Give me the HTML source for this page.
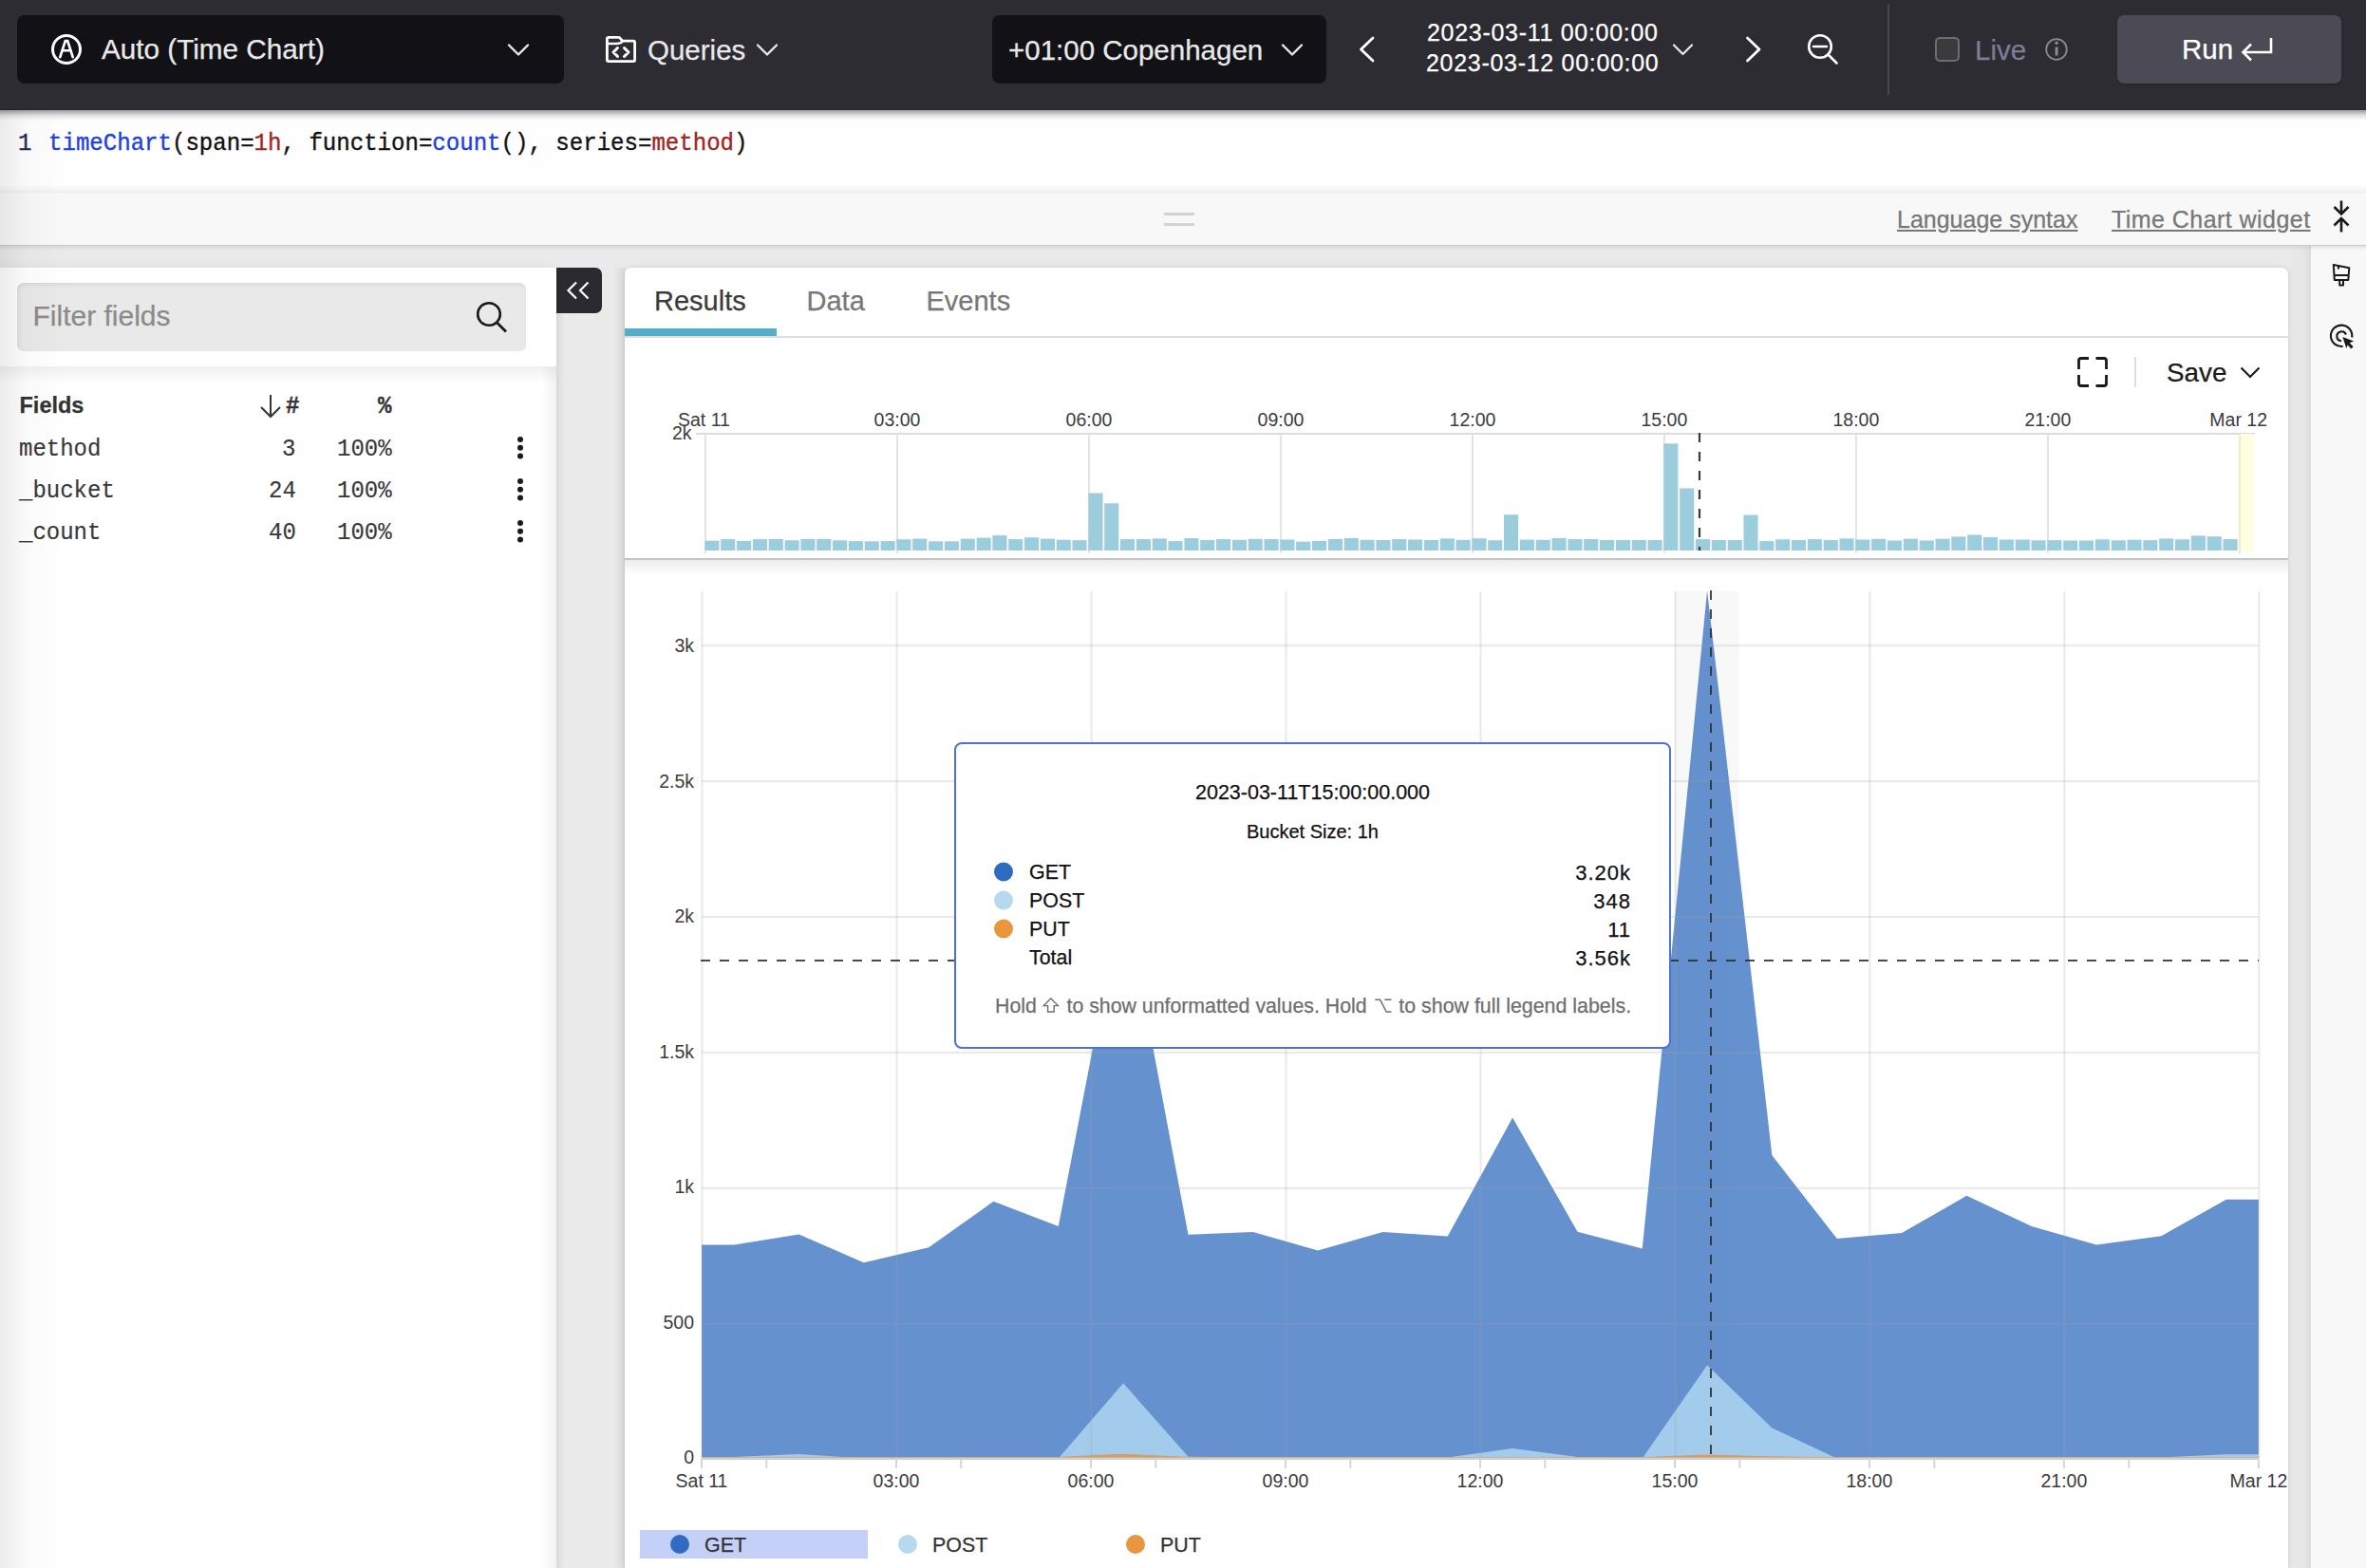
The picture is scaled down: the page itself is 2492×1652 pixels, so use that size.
<!DOCTYPE html>
<html><head><meta charset="utf-8">
<style>
*{margin:0;padding:0;box-sizing:border-box}
html,body{width:2492px;height:1652px;overflow:hidden;background:#eaeaea;font-family:"Liberation Sans",sans-serif}
.a{position:absolute}
.t{position:absolute;white-space:nowrap;line-height:1;-webkit-text-stroke:0.25px currentColor}
.mono{font-family:"Liberation Mono",monospace;-webkit-text-stroke:0.35px currentColor;transform:scaleY(1.07);transform-origin:0 84.6%}
svg{position:absolute;left:0;top:0}
</style></head><body>

<!-- top bar -->
<div class="a" style="left:0;top:0;width:2492px;height:115px;background:#2d2c32"></div>
<div class="a" style="left:0;top:115px;width:2492px;height:1px;background:#252429;z-index:1"></div>
<div class="a" style="left:18px;top:16px;width:576px;height:72px;background:#121116;border-radius:8px"></div>
<svg width="2492" height="120" style="z-index:2" stroke-linecap="round" stroke-linejoin="round">
  <!-- circle A -->
  <circle cx="70" cy="52" r="14.5" fill="none" stroke="#fff" stroke-width="3"/>
  <path d="M63.3 60.2 L68.8 43.2 H71.2 L76.7 60.2" fill="none" stroke="#fff" stroke-width="2.7" stroke-linejoin="miter"/>
  <path d="M65.8 53.2 H74.2" fill="none" stroke="#fff" stroke-width="2.6"/>
  <!-- chevron -->
  <path d="M536 47.5 L546 57.5 L556 47.5" fill="none" stroke="#e8e8ea" stroke-width="2.4"/>
  <!-- folder icon -->
  <path d="M639.4 63 V41 Q639.4 39.4 641 39.4 H652.3 L655.8 43.2 H667 Q668.6 43.2 668.6 44.8 V63 Q668.6 64.6 667 64.6 H641 Q639.4 64.6 639.4 63 Z" fill="none" stroke="#fff" stroke-width="2.8"/>
  <path d="M639.4 46 H649.5 Q653.5 46 656 43.2" fill="none" stroke="#fff" stroke-width="2.4"/>
  <path d="M650.5 50.5 L646 55 L650.5 59.5 M657.5 50.5 L662 55 L657.5 59.5" fill="none" stroke="#fff" stroke-width="3"/>
  <path d="M798 47.5 L808 57.5 L818 47.5" fill="none" stroke="#e8e8ea" stroke-width="2.4"/>
  <!-- tz chevron -->
  <path d="M1351 47.5 L1361 57.5 L1371 47.5" fill="none" stroke="#e8e8ea" stroke-width="2.4"/>
  <!-- < > -->
  <path d="M1446 40 L1433.5 52 L1446 64" fill="none" stroke="#fff" stroke-width="2.8"/>
  <path d="M1840.5 40 L1853 52 L1840.5 64" fill="none" stroke="#fff" stroke-width="2.8"/>
  <path d="M1763 47.5 L1772.5 57 L1782 47.5" fill="none" stroke="#e8e8ea" stroke-width="2.2"/>
  <!-- zoom out -->
  <circle cx="1917" cy="49" r="11.8" fill="none" stroke="#fff" stroke-width="2.6"/>
  <path d="M1910 49 H1924 M1925.5 57.5 L1934.5 66.5" fill="none" stroke="#fff" stroke-width="2.6"/>
  <!-- separator -->
  <rect x="1988" y="4" width="2" height="96" fill="#48474e"/>
  <!-- checkbox -->
  <rect x="2039" y="40" width="24" height="24" rx="4" fill="#3b3b3d" stroke="#6e6e6e" stroke-width="2"/>
  <!-- info -->
  <circle cx="2166" cy="52" r="10.8" fill="none" stroke="#8b8b8b" stroke-width="1.8"/>
  <rect x="2164.6" y="49.5" width="3" height="9" fill="#8b8b8b"/>
  <circle cx="2166.1" cy="45.2" r="1.7" fill="#8b8b8b"/>
</svg>
<div class="a" style="left:2230px;top:16px;width:236px;height:72px;background:#4b4a55;border-radius:7px;box-shadow:0 1px 2px rgba(0,0,0,0.3)"></div>
<svg width="2492" height="120" style="z-index:3">
  <path d="M2392 40 V55 H2363 M2371 46.5 L2362.5 55 L2371 63.5" fill="none" stroke="#fff" stroke-width="2.6"/>
</svg>
<div class="a" style="left:1045px;top:16px;width:352px;height:72px;background:#121116;border-radius:8px"></div>

<div class="t" style="left:107px;top:37.2px;font-size:29.7px;color:#e9e9eb;z-index:4">Auto (Time Chart)</div>
<div class="t" style="left:682px;top:37.5px;font-size:29.5px;color:#e9e9eb;z-index:4">Queries</div>
<div class="t" style="left:1062px;top:37.5px;font-size:29.5px;color:#e9e9eb;z-index:4">+01:00 Copenhagen</div>
<div class="t" style="left:1503px;top:22.4px;letter-spacing:0.7px;font-size:25px;color:#fff;z-index:4">2023-03-11 00:00:00</div>
<div class="t" style="left:1502px;top:54.4px;letter-spacing:0.7px;font-size:25px;color:#fff;z-index:4">2023-03-12 00:00:00</div>
<div class="t" style="left:2080px;top:37.5px;font-size:29.5px;color:#7c7e98;z-index:4">Live</div>
<div class="t" style="left:2298px;top:36.5px;font-size:29.5px;color:#fff;z-index:4">Run</div>

<!-- editor -->
<div class="a" style="left:0;top:115px;width:2492px;height:88px;background:#fefefe;z-index:0"></div>
<div class="t mono" style="left:19px;top:140px;font-size:24px;color:#1e2b5a;z-index:4">1</div>
<div class="t mono" style="left:51px;top:140px;font-size:24.07px;color:#111;z-index:4"><span style="color:#1c3fe6">timeChart</span>(span=<span style="color:#a1261f">1h</span>, function=<span style="color:#1c3fe6">count</span>(), series=<span style="color:#a1261f">method</span>)</div>

<div class="a" style="left:0;top:116px;width:2492px;height:12px;background:linear-gradient(rgba(0,0,0,0.36),rgba(0,0,0,0.3) 15%,rgba(0,0,0,0.12) 45%,rgba(0,0,0,0.03) 75%,rgba(0,0,0,0))"></div>
<!-- toolbar -->
<div class="a" style="left:0;top:195px;width:2492px;height:8px;background:linear-gradient(rgba(0,0,0,0),rgba(0,0,0,0.06))"></div>
<div class="a" style="left:0;top:202px;width:2492px;height:57px;background:#f8f8f8;border-top:1px solid #ececec;border-bottom:1px solid #cccccc"></div>
<div class="a" style="left:1226px;top:224px;width:32px;height:3px;background:#d3d3d3"></div>
<div class="a" style="left:1226px;top:235px;width:32px;height:3px;background:#d3d3d3"></div>
<div class="t" style="left:1998px;top:218.5px;font-size:25px;color:#777;text-decoration:underline;z-index:4">Language syntax</div>
<div class="t" style="left:2224px;top:218.5px;letter-spacing:0.45px;font-size:25px;color:#777;text-decoration:underline;z-index:4">Time Chart widget</div>
<div class="a" style="left:0;top:259px;width:2492px;height:5px;background:linear-gradient(rgba(0,0,0,0.08),rgba(0,0,0,0));z-index:2"></div>

<!-- right sidebar -->
<div class="a" style="left:2434px;top:259px;width:58px;height:1393px;background:#f8f8f8"></div>
<div class="a" style="left:2410px;top:259px;width:24px;height:1393px;background:linear-gradient(90deg,#e9e9e9 0,#e6e6e6 70%,#dcdcdc 100%)"></div>

<!-- left panel -->
<div class="a" style="left:0;top:282px;width:586px;height:1370px;background:#fff;box-shadow:0 0 10px rgba(0,0,0,0.06)"></div>
<div class="a" style="left:0;top:386px;width:586px;height:1266px;background:linear-gradient(rgba(0,0,0,0.06),rgba(0,0,0,0) 18px)"></div>
<div class="a" style="left:570px;top:386px;width:16px;height:1266px;background:linear-gradient(90deg,rgba(0,0,0,0),rgba(0,0,0,0.05))"></div>
<div class="a" style="left:18px;top:298px;width:536px;height:72px;background:#e9e9e9;border-radius:7px;box-shadow:inset 1px 2px 4px rgba(0,0,0,0.08)"></div>
<div class="t" style="left:34.5px;top:318.4px;font-size:30px;color:#8b8b8b">Filter fields</div>
<div class="t" style="left:20.5px;top:416px;font-size:23.5px;font-weight:bold;color:#333">Fields</div>
<div class="t mono" style="left:301px;top:417px;font-size:24px;font-weight:bold;color:#333">#</div>
<div class="t mono" style="left:398px;top:417px;font-size:24px;font-weight:bold;color:#333">%</div>
<div class="t mono" style="left:20px;top:462px;font-size:24px;color:#383838;-webkit-text-stroke:0.15px #383838">method</div>
<div class="t mono" style="left:20px;top:506px;font-size:24px;color:#383838;-webkit-text-stroke:0.15px #383838">_bucket</div>
<div class="t mono" style="left:20px;top:550px;font-size:24px;color:#383838;-webkit-text-stroke:0.15px #383838">_count</div>
<div class="t mono" style="left:297px;top:462px;font-size:24px;color:#383838;-webkit-text-stroke:0.15px #383838">3</div>
<div class="t mono" style="left:283px;top:506px;font-size:24px;color:#383838;-webkit-text-stroke:0.15px #383838">24</div>
<div class="t mono" style="left:283px;top:550px;font-size:24px;color:#383838;-webkit-text-stroke:0.15px #383838">40</div>
<div class="t mono" style="left:355px;top:462px;font-size:24px;color:#383838;-webkit-text-stroke:0.15px #383838">100%</div>
<div class="t mono" style="left:355px;top:506px;font-size:24px;color:#383838;-webkit-text-stroke:0.15px #383838">100%</div>
<div class="t mono" style="left:355px;top:550px;font-size:24px;color:#383838;-webkit-text-stroke:0.15px #383838">100%</div>
<svg width="700" height="600" style="z-index:3">
  <circle cx="515" cy="331" r="11.8" fill="none" stroke="#1a1a1a" stroke-width="2.6"/>
  <path d="M523.5 340 L533 349.5" stroke="#1a1a1a" stroke-width="2.8"/>
  <path d="M285 416 V439 M275 429 L285 439 L295 429" fill="none" stroke="#333" stroke-width="2"/>
  <g fill="#1a1a1a">
    <circle cx="548" cy="463" r="3"/><circle cx="548" cy="471.7" r="3"/><circle cx="548" cy="480.4" r="3"/>
    <circle cx="548" cy="507" r="3"/><circle cx="548" cy="515.7" r="3"/><circle cx="548" cy="524.4" r="3"/>
    <circle cx="548" cy="551" r="3"/><circle cx="548" cy="559.7" r="3"/><circle cx="548" cy="568.4" r="3"/>
  </g>
</svg>

<div class="a" style="left:586px;top:282px;width:8px;height:1370px;background:linear-gradient(90deg,rgba(0,0,0,0.055),rgba(0,0,0,0))"></div>
<div class="a" style="left:646px;top:282px;width:12px;height:1370px;background:linear-gradient(90deg,rgba(0,0,0,0),rgba(0,0,0,0.07))"></div>
<!-- collapse button -->
<div class="a" style="left:586px;top:282px;width:48px;height:48px;background:#2b2a30;border-radius:0 7px 7px 0"></div>
<svg width="700" height="400" style="z-index:3">
  <path d="M607 297.5 L598.5 306 L607 314.5 M619.5 297.5 L611 306 L619.5 314.5" fill="none" stroke="#fff" stroke-width="2.2"/>
</svg>

<!-- results panel -->
<div class="a" style="left:658px;top:282px;width:1752px;height:1370px;background:#fff;border-radius:7px 7px 0 0;box-shadow:0 0 3px rgba(0,0,0,0.10),0 0 10px rgba(0,0,0,0.06)"></div>
<div class="a" style="left:658px;top:354px;width:1752px;height:2px;background:#dedede"></div>
<div class="a" style="left:658px;top:346px;width:160px;height:8px;background:#55aec8"></div>
<div class="t" style="left:689px;top:303.4px;font-size:29px;color:#3a3a3a">Results</div>
<div class="t" style="left:849.5px;top:303.4px;font-size:29px;color:#777">Data</div>
<div class="t" style="left:975.5px;top:303.4px;font-size:29px;color:#777">Events</div>
<div class="t" style="left:2282px;top:378.7px;font-size:27.8px;color:#1a1a1a">Save</div>
<div class="a" style="left:2248px;top:376px;width:2px;height:32px;background:#ddd"></div>
<svg width="2492" height="420" style="z-index:3">
  <path d="M2189.5 389 V380 Q2189.5 377.5 2192 377.5 H2200 M2207.5 377.5 H2216 Q2218.5 377.5 2218.5 380 V389 M2218.5 395 V404 Q2218.5 406.5 2216 406.5 H2207.5 M2200 406.5 H2192 Q2189.5 406.5 2189.5 404 V395" fill="none" stroke="#1a1a1a" stroke-width="2.8"/>
  <path d="M2360.5 387.5 L2370 397 L2379.5 387.5" fill="none" stroke="#1a1a1a" stroke-width="2.2"/>
  <!-- collapse arrows -->
  <path d="M2466 211.5 V225 M2458.5 218 L2466 225.5 L2473.5 218 M2466 244.5 V231 M2458.5 237.5 L2466 230 L2473.5 237.5" fill="none" stroke="#1a1a1a" stroke-width="2.6"/>
</svg>
<!-- mini chart bottom border -->
<div class="a" style="left:658px;top:588px;width:1752px;height:2px;background:#c4c4c4"></div>
<div class="a" style="left:658px;top:590px;width:1752px;height:16px;background:linear-gradient(rgba(0,0,0,0.075),rgba(0,0,0,0))"></div>

<!-- right sidebar icons -->
<svg width="2492" height="420" style="z-index:3">
  <path d="M2457.8 279 L2474.3 282.2 L2473.3 295 H2458.8 Z M2458.3 290 H2473.8 M2463 280.5 V283.5" fill="none" stroke="#1a1a1a" stroke-width="2" stroke-linejoin="round"/>
  <path d="M2464.2 295.5 V300.5 H2468 V295.5" fill="none" stroke="#1a1a1a" stroke-width="2" stroke-linejoin="round"/>
  <path d="M2477.2 355.5 A11.2 11.2 0 1 0 2467.6 364.9" fill="none" stroke="#1a1a1a" stroke-width="2.1"/>
  <path d="M2471 352.5 A5 5 0 1 0 2466 359.3" fill="none" stroke="#1a1a1a" stroke-width="2.1"/>
  <path d="M2467.4 355.1 L2479.2 359.4 L2474.8 361.2 L2478.6 365.2 L2476.4 367.4 L2472.6 363.4 L2471.3 367 Z" fill="#1a1a1a"/>
</svg>

<!-- charts -->
<svg width="2492" height="1652" style="z-index:1">
<g>
<rect x="733" y="456" width="1642" height="2" fill="#dcdcdc"/>
<rect x="742.0" y="457" width="2" height="126" fill="#e4e4e4"/>
<rect x="944.0" y="457" width="2" height="126" fill="#e4e4e4"/>
<rect x="1146.0" y="457" width="2" height="126" fill="#e4e4e4"/>
<rect x="1348.0" y="457" width="2" height="126" fill="#e4e4e4"/>
<rect x="1550.0" y="457" width="2" height="126" fill="#e4e4e4"/>
<rect x="1751.9" y="457" width="2" height="126" fill="#e4e4e4"/>
<rect x="1953.9" y="457" width="2" height="126" fill="#e4e4e4"/>
<rect x="2155.9" y="457" width="2" height="126" fill="#e4e4e4"/>
<rect x="2357.9" y="457" width="2" height="126" fill="#e4e4e4"/>
<rect x="2358" y="457" width="16" height="123" fill="#fefee0"/>
<rect x="2358" y="457" width="2" height="123" fill="#ededc8"/>
<rect x="742.4" y="569.7" width="15.1" height="10.3" fill="#9bcddc"/>
<rect x="759.2" y="568.1" width="15.1" height="11.9" fill="#9bcddc"/>
<rect x="776.1" y="569.9" width="15.1" height="10.1" fill="#9bcddc"/>
<rect x="792.9" y="568.1" width="15.1" height="11.9" fill="#9bcddc"/>
<rect x="809.7" y="567.9" width="15.1" height="12.1" fill="#9bcddc"/>
<rect x="826.6" y="569.3" width="15.1" height="10.7" fill="#9bcddc"/>
<rect x="843.4" y="567.9" width="15.1" height="12.1" fill="#9bcddc"/>
<rect x="860.2" y="567.9" width="15.1" height="12.1" fill="#9bcddc"/>
<rect x="877.1" y="569.3" width="15.1" height="10.7" fill="#9bcddc"/>
<rect x="893.9" y="570.1" width="15.1" height="9.9" fill="#9bcddc"/>
<rect x="910.7" y="570.3" width="15.1" height="9.7" fill="#9bcddc"/>
<rect x="927.6" y="570.1" width="15.1" height="9.9" fill="#9bcddc"/>
<rect x="944.4" y="568.3" width="15.1" height="11.7" fill="#9bcddc"/>
<rect x="961.2" y="567.6" width="15.1" height="12.4" fill="#9bcddc"/>
<rect x="978.1" y="570.3" width="15.1" height="9.7" fill="#9bcddc"/>
<rect x="994.9" y="570.3" width="15.1" height="9.7" fill="#9bcddc"/>
<rect x="1011.7" y="567.6" width="15.1" height="12.4" fill="#9bcddc"/>
<rect x="1028.6" y="566.6" width="15.1" height="13.4" fill="#9bcddc"/>
<rect x="1045.4" y="564.1" width="15.1" height="15.9" fill="#9bcddc"/>
<rect x="1062.2" y="568.1" width="15.1" height="11.9" fill="#9bcddc"/>
<rect x="1079.1" y="566.2" width="15.1" height="13.8" fill="#9bcddc"/>
<rect x="1095.9" y="567.6" width="15.1" height="12.4" fill="#9bcddc"/>
<rect x="1112.7" y="568.7" width="15.1" height="11.3" fill="#9bcddc"/>
<rect x="1129.5" y="569.1" width="15.1" height="10.9" fill="#9bcddc"/>
<rect x="1146.4" y="519.5" width="15.1" height="60.5" fill="#9bcddc"/>
<rect x="1163.2" y="530.3" width="15.1" height="49.7" fill="#9bcddc"/>
<rect x="1180.0" y="568.1" width="15.1" height="11.9" fill="#9bcddc"/>
<rect x="1196.9" y="568.1" width="15.1" height="11.9" fill="#9bcddc"/>
<rect x="1213.7" y="567.4" width="15.1" height="12.6" fill="#9bcddc"/>
<rect x="1230.5" y="570.1" width="15.1" height="9.9" fill="#9bcddc"/>
<rect x="1247.4" y="567.0" width="15.1" height="13.0" fill="#9bcddc"/>
<rect x="1264.2" y="569.0" width="15.1" height="11.0" fill="#9bcddc"/>
<rect x="1281.0" y="568.1" width="15.1" height="11.9" fill="#9bcddc"/>
<rect x="1297.9" y="568.8" width="15.1" height="11.2" fill="#9bcddc"/>
<rect x="1314.7" y="567.8" width="15.1" height="12.2" fill="#9bcddc"/>
<rect x="1331.5" y="568.1" width="15.1" height="11.9" fill="#9bcddc"/>
<rect x="1348.4" y="568.5" width="15.1" height="11.5" fill="#9bcddc"/>
<rect x="1365.2" y="570.6" width="15.1" height="9.4" fill="#9bcddc"/>
<rect x="1382.0" y="569.9" width="15.1" height="10.1" fill="#9bcddc"/>
<rect x="1398.9" y="567.9" width="15.1" height="12.1" fill="#9bcddc"/>
<rect x="1415.7" y="567.0" width="15.1" height="13.0" fill="#9bcddc"/>
<rect x="1432.5" y="568.8" width="15.1" height="11.2" fill="#9bcddc"/>
<rect x="1449.4" y="569.0" width="15.1" height="11.0" fill="#9bcddc"/>
<rect x="1466.2" y="568.1" width="15.1" height="11.9" fill="#9bcddc"/>
<rect x="1483.0" y="568.5" width="15.1" height="11.5" fill="#9bcddc"/>
<rect x="1499.9" y="569.0" width="15.1" height="11.0" fill="#9bcddc"/>
<rect x="1516.7" y="567.4" width="15.1" height="12.6" fill="#9bcddc"/>
<rect x="1533.5" y="568.8" width="15.1" height="11.2" fill="#9bcddc"/>
<rect x="1550.4" y="567.2" width="15.1" height="12.8" fill="#9bcddc"/>
<rect x="1567.2" y="569.2" width="15.1" height="10.8" fill="#9bcddc"/>
<rect x="1584.0" y="542.2" width="15.1" height="37.8" fill="#9bcddc"/>
<rect x="1600.9" y="568.6" width="15.1" height="11.4" fill="#9bcddc"/>
<rect x="1617.7" y="568.8" width="15.1" height="11.2" fill="#9bcddc"/>
<rect x="1634.5" y="566.9" width="15.1" height="13.1" fill="#9bcddc"/>
<rect x="1651.4" y="568.1" width="15.1" height="11.9" fill="#9bcddc"/>
<rect x="1668.2" y="568.1" width="15.1" height="11.9" fill="#9bcddc"/>
<rect x="1685.0" y="569.0" width="15.1" height="11.0" fill="#9bcddc"/>
<rect x="1701.9" y="569.0" width="15.1" height="11.0" fill="#9bcddc"/>
<rect x="1718.7" y="569.0" width="15.1" height="11.0" fill="#9bcddc"/>
<rect x="1735.5" y="569.0" width="15.1" height="11.0" fill="#9bcddc"/>
<rect x="1752.3" y="467.3" width="15.1" height="112.7" fill="#9bcddc"/>
<rect x="1769.2" y="514.5" width="15.1" height="65.5" fill="#9bcddc"/>
<rect x="1786.0" y="568.1" width="15.1" height="11.9" fill="#9bcddc"/>
<rect x="1802.8" y="569.0" width="15.1" height="11.0" fill="#9bcddc"/>
<rect x="1819.7" y="569.0" width="15.1" height="11.0" fill="#9bcddc"/>
<rect x="1836.5" y="542.5" width="15.1" height="37.5" fill="#9bcddc"/>
<rect x="1853.3" y="570.1" width="15.1" height="9.9" fill="#9bcddc"/>
<rect x="1870.2" y="568.3" width="15.1" height="11.7" fill="#9bcddc"/>
<rect x="1887.0" y="569.0" width="15.1" height="11.0" fill="#9bcddc"/>
<rect x="1903.8" y="568.1" width="15.1" height="11.9" fill="#9bcddc"/>
<rect x="1920.7" y="569.0" width="15.1" height="11.0" fill="#9bcddc"/>
<rect x="1937.5" y="567.4" width="15.1" height="12.6" fill="#9bcddc"/>
<rect x="1954.3" y="568.5" width="15.1" height="11.5" fill="#9bcddc"/>
<rect x="1971.2" y="567.8" width="15.1" height="12.2" fill="#9bcddc"/>
<rect x="1988.0" y="569.5" width="15.1" height="10.5" fill="#9bcddc"/>
<rect x="2004.8" y="567.6" width="15.1" height="12.4" fill="#9bcddc"/>
<rect x="2021.7" y="569.5" width="15.1" height="10.5" fill="#9bcddc"/>
<rect x="2038.5" y="567.6" width="15.1" height="12.4" fill="#9bcddc"/>
<rect x="2055.3" y="565.4" width="15.1" height="14.6" fill="#9bcddc"/>
<rect x="2072.2" y="563.5" width="15.1" height="16.5" fill="#9bcddc"/>
<rect x="2089.0" y="566.0" width="15.1" height="14.0" fill="#9bcddc"/>
<rect x="2105.8" y="568.5" width="15.1" height="11.5" fill="#9bcddc"/>
<rect x="2122.7" y="568.5" width="15.1" height="11.5" fill="#9bcddc"/>
<rect x="2139.5" y="569.3" width="15.1" height="10.7" fill="#9bcddc"/>
<rect x="2156.3" y="569.1" width="15.1" height="10.9" fill="#9bcddc"/>
<rect x="2173.2" y="569.5" width="15.1" height="10.5" fill="#9bcddc"/>
<rect x="2190.0" y="569.5" width="15.1" height="10.5" fill="#9bcddc"/>
<rect x="2206.8" y="568.3" width="15.1" height="11.7" fill="#9bcddc"/>
<rect x="2223.7" y="569.3" width="15.1" height="10.7" fill="#9bcddc"/>
<rect x="2240.5" y="568.7" width="15.1" height="11.3" fill="#9bcddc"/>
<rect x="2257.3" y="569.1" width="15.1" height="10.9" fill="#9bcddc"/>
<rect x="2274.2" y="567.4" width="15.1" height="12.6" fill="#9bcddc"/>
<rect x="2291.0" y="568.3" width="15.1" height="11.7" fill="#9bcddc"/>
<rect x="2307.8" y="564.4" width="15.1" height="15.6" fill="#9bcddc"/>
<rect x="2324.7" y="565.2" width="15.1" height="14.8" fill="#9bcddc"/>
<rect x="2341.5" y="568.1" width="15.1" height="11.9" fill="#9bcddc"/>
<line x1="1790" y1="456" x2="1790" y2="580" stroke="#3a3a3a" stroke-width="2.2" stroke-dasharray="10 10"/>
<text x="714.0" y="449" font-family="Liberation Sans, sans-serif" font-size="19.5" fill="#3c3c3c" text-anchor="start">Sat 11</text>
<text x="945.0" y="449" font-family="Liberation Sans, sans-serif" font-size="19.5" fill="#3c3c3c" text-anchor="middle">03:00</text>
<text x="1147.0" y="449" font-family="Liberation Sans, sans-serif" font-size="19.5" fill="#3c3c3c" text-anchor="middle">06:00</text>
<text x="1349.0" y="449" font-family="Liberation Sans, sans-serif" font-size="19.5" fill="#3c3c3c" text-anchor="middle">09:00</text>
<text x="1551.0" y="449" font-family="Liberation Sans, sans-serif" font-size="19.5" fill="#3c3c3c" text-anchor="middle">12:00</text>
<text x="1752.9" y="449" font-family="Liberation Sans, sans-serif" font-size="19.5" fill="#3c3c3c" text-anchor="middle">15:00</text>
<text x="1954.9" y="449" font-family="Liberation Sans, sans-serif" font-size="19.5" fill="#3c3c3c" text-anchor="middle">18:00</text>
<text x="2156.9" y="449" font-family="Liberation Sans, sans-serif" font-size="19.5" fill="#3c3c3c" text-anchor="middle">21:00</text>
<text x="2388.0" y="449" font-family="Liberation Sans, sans-serif" font-size="19.5" fill="#3c3c3c" text-anchor="end">Mar 12</text>
<text x="708" y="463" font-family="Liberation Sans, sans-serif" font-size="19.5" fill="#3c3c3c">2k</text>
</g>
<g>
<rect x="1764.5" y="623" width="66.8" height="913" fill="#f8f8f8"/>
<path d="M739.0 1536.5 L739.0 1311.6 L773.2 1311.6 L841.5 1300.5 L909.8 1330.2 L978.2 1314.2 L1046.5 1265.8 L1114.8 1292.0 L1183.1 938.0 L1251.5 1300.8 L1319.8 1298.0 L1388.1 1317.6 L1456.5 1298.0 L1524.8 1302.5 L1593.1 1177.4 L1661.5 1297.7 L1729.8 1315.6 L1798.1 622.2 L1866.4 1217.3 L1934.8 1305.1 L2003.1 1299.1 L2071.4 1259.8 L2139.8 1292.0 L2208.1 1311.6 L2276.4 1302.2 L2344.8 1263.8 L2378.9 1263.8 L2378.9 1536.5 Z" fill="#3570c0" fill-opacity="0.765"/>
<path d="M739.0 1536.5 L739.0 1535.1 L773.2 1535.1 L841.5 1531.9 L909.8 1536.5 L978.2 1535.6 L1046.5 1535.9 L1114.8 1536.5 L1183.1 1457.3 L1251.5 1534.8 L1319.8 1535.6 L1388.1 1535.6 L1456.5 1535.6 L1524.8 1535.6 L1593.1 1526.0 L1661.5 1535.1 L1729.8 1536.5 L1798.1 1438.2 L1866.4 1504.6 L1934.8 1536.5 L2003.1 1535.6 L2071.4 1535.6 L2139.8 1535.6 L2208.1 1535.6 L2276.4 1535.6 L2344.8 1532.2 L2378.9 1532.2 L2378.9 1536.5 Z" fill="#b3daf2" fill-opacity="0.8"/>
<path d="M739.0 1536.5 L739.0 1535.6 L773.2 1535.6 L841.5 1535.4 L909.8 1535.6 L978.2 1535.6 L1046.5 1535.4 L1114.8 1535.4 L1183.1 1532.2 L1251.5 1535.4 L1319.8 1535.6 L1388.1 1535.6 L1456.5 1535.6 L1524.8 1535.6 L1593.1 1535.6 L1661.5 1535.6 L1729.8 1535.6 L1798.1 1533.1 L1866.4 1534.8 L1934.8 1535.6 L2003.1 1535.6 L2071.4 1535.6 L2139.8 1535.6 L2208.1 1535.6 L2276.4 1535.6 L2344.8 1535.6 L2378.9 1535.6 L2378.9 1536.5 Z" fill="#e0954a" fill-opacity="0.85" stroke="#dc9650" stroke-width="1" stroke-opacity="0.8"/>
<rect x="739" y="1393.7" width="1640" height="2" fill="#a0a0a0" fill-opacity="0.23"/>
<rect x="739" y="1250.8" width="1640" height="2" fill="#a0a0a0" fill-opacity="0.23"/>
<rect x="739" y="1107.9" width="1640" height="2" fill="#a0a0a0" fill-opacity="0.23"/>
<rect x="739" y="965.0" width="1640" height="2" fill="#a0a0a0" fill-opacity="0.23"/>
<rect x="739" y="822.1" width="1640" height="2" fill="#a0a0a0" fill-opacity="0.23"/>
<rect x="739" y="679.2" width="1640" height="2" fill="#a0a0a0" fill-opacity="0.23"/>
<rect x="738.5" y="623" width="2" height="913" fill="#a0a0a0" fill-opacity="0.23"/>
<rect x="943.5" y="623" width="2" height="913" fill="#a0a0a0" fill-opacity="0.23"/>
<rect x="1148.5" y="623" width="2" height="913" fill="#a0a0a0" fill-opacity="0.23"/>
<rect x="1353.5" y="623" width="2" height="913" fill="#a0a0a0" fill-opacity="0.23"/>
<rect x="1558.5" y="623" width="2" height="913" fill="#a0a0a0" fill-opacity="0.23"/>
<rect x="1763.5" y="623" width="2" height="913" fill="#a0a0a0" fill-opacity="0.23"/>
<rect x="1968.4" y="623" width="2" height="913" fill="#a0a0a0" fill-opacity="0.23"/>
<rect x="2173.4" y="623" width="2" height="913" fill="#a0a0a0" fill-opacity="0.23"/>
<rect x="2378.4" y="623" width="2" height="913" fill="#a0a0a0" fill-opacity="0.23"/>
<rect x="739" y="1535.6" width="1640" height="2.4" fill="#cfcfcf"/>
<rect x="738.0" y="1537" width="2" height="10" fill="#d6d6d6"/>
<rect x="806.3" y="1537" width="2" height="10" fill="#d6d6d6"/>
<rect x="943.0" y="1537" width="2" height="10" fill="#d6d6d6"/>
<rect x="1011.3" y="1537" width="2" height="10" fill="#d6d6d6"/>
<rect x="1148.0" y="1537" width="2" height="10" fill="#d6d6d6"/>
<rect x="1216.3" y="1537" width="2" height="10" fill="#d6d6d6"/>
<rect x="1353.0" y="1537" width="2" height="10" fill="#d6d6d6"/>
<rect x="1421.3" y="1537" width="2" height="10" fill="#d6d6d6"/>
<rect x="1558.0" y="1537" width="2" height="10" fill="#d6d6d6"/>
<rect x="1626.3" y="1537" width="2" height="10" fill="#d6d6d6"/>
<rect x="1763.0" y="1537" width="2" height="10" fill="#d6d6d6"/>
<rect x="1831.3" y="1537" width="2" height="10" fill="#d6d6d6"/>
<rect x="1967.9" y="1537" width="2" height="10" fill="#d6d6d6"/>
<rect x="2036.3" y="1537" width="2" height="10" fill="#d6d6d6"/>
<rect x="2172.9" y="1537" width="2" height="10" fill="#d6d6d6"/>
<rect x="2241.3" y="1537" width="2" height="10" fill="#d6d6d6"/>
<rect x="2377.9" y="1537" width="2" height="10" fill="#d6d6d6"/>
<text x="731" y="1542.3" font-family="Liberation Sans, sans-serif" font-size="19.5" fill="#3c3c3c" text-anchor="end">0</text>
<text x="731" y="1399.8" font-family="Liberation Sans, sans-serif" font-size="19.5" fill="#3c3c3c" text-anchor="end">500</text>
<text x="731" y="1257.3" font-family="Liberation Sans, sans-serif" font-size="19.5" fill="#3c3c3c" text-anchor="end">1k</text>
<text x="731" y="1114.8" font-family="Liberation Sans, sans-serif" font-size="19.5" fill="#3c3c3c" text-anchor="end">1.5k</text>
<text x="731" y="972.3" font-family="Liberation Sans, sans-serif" font-size="19.5" fill="#3c3c3c" text-anchor="end">2k</text>
<text x="731" y="829.8" font-family="Liberation Sans, sans-serif" font-size="19.5" fill="#3c3c3c" text-anchor="end">2.5k</text>
<text x="731" y="687.3" font-family="Liberation Sans, sans-serif" font-size="19.5" fill="#3c3c3c" text-anchor="end">3k</text>
<text x="739.0" y="1567" font-family="Liberation Sans, sans-serif" font-size="19.5" fill="#3c3c3c" text-anchor="middle">Sat 11</text>
<text x="944.0" y="1567" font-family="Liberation Sans, sans-serif" font-size="19.5" fill="#3c3c3c" text-anchor="middle">03:00</text>
<text x="1149.0" y="1567" font-family="Liberation Sans, sans-serif" font-size="19.5" fill="#3c3c3c" text-anchor="middle">06:00</text>
<text x="1354.0" y="1567" font-family="Liberation Sans, sans-serif" font-size="19.5" fill="#3c3c3c" text-anchor="middle">09:00</text>
<text x="1559.0" y="1567" font-family="Liberation Sans, sans-serif" font-size="19.5" fill="#3c3c3c" text-anchor="middle">12:00</text>
<text x="1764.0" y="1567" font-family="Liberation Sans, sans-serif" font-size="19.5" fill="#3c3c3c" text-anchor="middle">15:00</text>
<text x="1968.9" y="1567" font-family="Liberation Sans, sans-serif" font-size="19.5" fill="#3c3c3c" text-anchor="middle">18:00</text>
<text x="2173.9" y="1567" font-family="Liberation Sans, sans-serif" font-size="19.5" fill="#3c3c3c" text-anchor="middle">21:00</text>
<text x="2378.9" y="1567" font-family="Liberation Sans, sans-serif" font-size="19.5" fill="#3c3c3c" text-anchor="middle">Mar 12</text>
<line x1="1802" y1="622" x2="1802" y2="1536" stroke="#2e2a26" stroke-opacity="0.85" stroke-width="2" stroke-dasharray="10 10"/>
<line x1="738" y1="1012" x2="2379" y2="1012" stroke="#2e2a26" stroke-opacity="0.85" stroke-width="2" stroke-dasharray="10 10"/>
</g>
</svg>

<!-- tooltip -->
<div class="a" style="left:1005px;top:782px;width:755px;height:323px;background:#fff;border:2px solid #4d70dc;border-radius:8px;z-index:5"></div>
<div class="t" style="left:1005px;width:755px;text-align:center;top:825px;font-size:21.5px;color:#111;z-index:6">2023-03-11T15:00:00.000</div>
<div class="t" style="left:1005px;width:755px;text-align:center;top:866px;font-size:20px;color:#111;z-index:6">Bucket Size: 1h</div>
<svg width="2492" height="1652" style="z-index:6">
  <circle cx="1057" cy="918.5" r="10" fill="#2f6ac3"/>
  <circle cx="1057" cy="948.5" r="10" fill="#b5daf0"/>
  <circle cx="1057" cy="978.5" r="10" fill="#e8973f"/>
  <circle cx="716" cy="1627" r="10" fill="#2f6ac3"/>
  <circle cx="956" cy="1627" r="10" fill="#b5daf0"/>
  <circle cx="1196" cy="1627" r="10" fill="#e8973f"/>
</svg>
<div class="t" style="left:1084px;top:908.5px;font-size:21.4px;color:#111;z-index:6">GET</div>
<div class="t" style="left:1084px;top:938.5px;font-size:21.4px;color:#111;z-index:6">POST</div>
<div class="t" style="left:1084px;top:968.5px;font-size:21.4px;color:#111;z-index:6">PUT</div>
<div class="t" style="left:1084px;top:998.5px;font-size:21.4px;color:#111;z-index:6">Total</div>
<div class="t" style="left:1517px;width:201px;text-align:right;top:908.5px;font-size:22px;letter-spacing:1px;color:#111;z-index:6">3.20k</div>
<div class="t" style="left:1517px;width:201px;text-align:right;top:938.5px;font-size:22px;letter-spacing:1px;color:#111;z-index:6">348</div>
<div class="t" style="left:1517px;width:201px;text-align:right;top:968.5px;font-size:22px;letter-spacing:1px;color:#111;z-index:6">11</div>
<div class="t" style="left:1517px;width:201px;text-align:right;top:998.5px;font-size:22px;letter-spacing:1px;color:#111;z-index:6">3.56k</div>
<div class="t" id="f1" style="left:1048px;top:1050.1px;font-size:21.3px;color:#6e6e6e;z-index:6">Hold</div>
<div class="t" id="f2" style="left:1123.5px;top:1050.1px;font-size:21.3px;color:#6e6e6e;z-index:6">to show unformatted values. Hold</div>
<div class="t" id="f3" style="left:1473.3px;top:1050.1px;font-size:21.38px;color:#6e6e6e;z-index:6">to show full legend labels.</div>
<svg width="2492" height="1652" style="z-index:6">
  <path d="M1106.8 1052 L1099.3 1059.6 H1103.6 V1066 H1110.2 V1059.6 H1114.4 Z" fill="none" stroke="#6e6e6e" stroke-width="1.4" stroke-linejoin="miter"/>
  <path d="M1448.4 1053.2 H1453.6 L1460.2 1066 H1465.5 M1458.3 1053.2 H1465.5" fill="none" stroke="#6e6e6e" stroke-width="1.5"/>
</svg>

<!-- legend -->
<div class="a" style="left:674px;top:1612px;width:240px;height:30px;background:#c5d0f8;z-index:4"></div>
<div class="t" style="left:742px;top:1617.5px;font-size:21.4px;color:#333;z-index:6">GET</div>
<div class="t" style="left:982px;top:1617.5px;font-size:21.4px;color:#333;z-index:6">POST</div>
<div class="t" style="left:1222px;top:1617.5px;font-size:21.4px;color:#333;z-index:6">PUT</div>

<div class="a" style="left:0;top:115px;width:70px;height:1537px;background:linear-gradient(90deg,rgba(0,0,0,0.075),rgba(0,0,0,0.02) 40%,rgba(0,0,0,0));z-index:7;pointer-events:none"></div>
</body></html>
